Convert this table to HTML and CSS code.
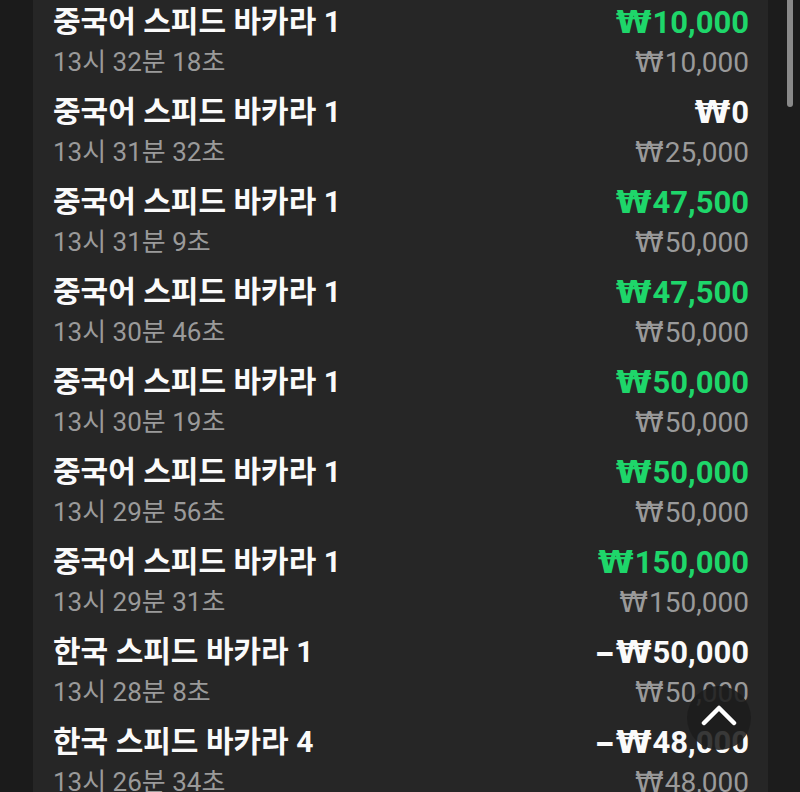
FILE: index.html
```html
<!DOCTYPE html>
<html lang="ko">
<head>
<meta charset="utf-8">
<link rel="stylesheet" href="styles.css">
</head>
<body>
<div class="screen">
  <div class="gutter"></div>
  <main class="panel">
    <ul class="list">
      <li class="row"><div class="info"><div class="title">중국어 스피드 바카라 1</div><div class="time">13시 32분 18초</div></div><div class="money"><div class="win green"><span class="won">₩</span>10,000</div><div class="bet"><span class="won">₩</span>10,000</div></div></li>
      <li class="row"><div class="info"><div class="title">중국어 스피드 바카라 1</div><div class="time">13시 31분 32초</div></div><div class="money"><div class="win"><span class="won">₩</span>0</div><div class="bet"><span class="won">₩</span>25,000</div></div></li>
      <li class="row"><div class="info"><div class="title">중국어 스피드 바카라 1</div><div class="time">13시 31분 9초</div></div><div class="money"><div class="win green"><span class="won">₩</span>47,500</div><div class="bet"><span class="won">₩</span>50,000</div></div></li>
      <li class="row"><div class="info"><div class="title">중국어 스피드 바카라 1</div><div class="time">13시 30분 46초</div></div><div class="money"><div class="win green"><span class="won">₩</span>47,500</div><div class="bet"><span class="won">₩</span>50,000</div></div></li>
      <li class="row"><div class="info"><div class="title">중국어 스피드 바카라 1</div><div class="time">13시 30분 19초</div></div><div class="money"><div class="win green"><span class="won">₩</span>50,000</div><div class="bet"><span class="won">₩</span>50,000</div></div></li>
      <li class="row"><div class="info"><div class="title">중국어 스피드 바카라 1</div><div class="time">13시 29분 56초</div></div><div class="money"><div class="win green"><span class="won">₩</span>50,000</div><div class="bet"><span class="won">₩</span>50,000</div></div></li>
      <li class="row"><div class="info"><div class="title">중국어 스피드 바카라 1</div><div class="time">13시 29분 31초</div></div><div class="money"><div class="win green"><span class="won">₩</span>150,000</div><div class="bet"><span class="won">₩</span>150,000</div></div></li>
      <li class="row"><div class="info"><div class="title">한국 스피드 바카라 1</div><div class="time">13시 28분 8초</div></div><div class="money"><div class="win"><span class="sign">-</span><span class="won">₩</span>50,000</div><div class="bet"><span class="won">₩</span>50,000</div></div></li>
      <li class="row"><div class="info"><div class="title">한국 스피드 바카라 4</div><div class="time">13시 26분 34초</div></div><div class="money"><div class="win"><span class="sign">-</span><span class="won">₩</span>48,000</div><div class="bet"><span class="won">₩</span>48,000</div></div></li>
    </ul>
  </main>
  <div class="rail"><div class="thumb"></div></div>
</div>
<button class="to-top" aria-label="맨 위로">
  <svg width="36" height="22" viewBox="0 0 36 22"><path d="M3 19 L18 4 L33 19" fill="none" stroke="#fff" stroke-width="4.5" stroke-linecap="round" stroke-linejoin="round"/></svg>
</button>
</body>
</html>
```
FILE: styles.css
```css
html, body {
  margin: 0;
  padding: 0;
  height: 100%;
  overflow: hidden;
  background: #1c1c1c;
}
body {
  font-family: "Roboto", "Noto Sans CJK KR", sans-serif;
  color: #fff;
}
.screen {
  display: flex;
  height: 792px;
}
.gutter {
  width: 33px;
  flex: none;
  background: #1b1b1b;
}
.panel {
  width: 735px;
  flex: none;
  background: #262626;
  padding: 0 19px 0 20px;
  box-sizing: border-box;
  overflow: hidden;
}
.list {
  list-style: none;
  margin: -2px 0 0 0;
  padding: 0;
}
.row {
  height: 90px;
  display: flex;
  justify-content: space-between;
  align-items: flex-start;
  padding-top: 4px;
  box-sizing: border-box;
}
.info, .money {
  display: flex;
  flex-direction: column;
}
.money {
  align-items: flex-end;
}
.title {
  font-size: 30px;
  font-weight: 700;
  line-height: 40px;
  color: #fafafa;
}
.time {
  font-size: 26px;
  font-weight: 400;
  line-height: 40px;
  color: #9a9a9a;
}
.win {
  font-size: 31px;
  font-weight: 700;
  line-height: 40px;
  color: #fafafa;
}
.win.green {
  color: #1ed66a;
}
.bet {
  font-size: 28px;
  font-weight: 400;
  line-height: 38px;
  color: #9a9a9a;
}
.won {
  font-family: "DejaVu Sans", sans-serif;
  font-size: 1.04em;
  margin-right: 1px;
}
.sign {
  display: inline-block;
  transform: scale(1.8, 1.2);
  margin: 0 5px 0 6px;
}
.rail {
  flex: 1;
  padding-left: 19px;
}
.thumb {
  width: 6px;
  height: 107px;
  border-radius: 0 0 3px 3px;
  background: #8a8a8a;
}
.to-top {
  position: absolute;
  left: 687px;
  top: 686px;
  width: 64px;
  height: 64px;
  border-radius: 50%;
  border: 0;
  padding: 0;
  background: rgba(28, 28, 28, 0.88);
  display: flex;
  align-items: center;
  justify-content: center;
}
.to-top svg {
  margin-top: -6px;
}
```
